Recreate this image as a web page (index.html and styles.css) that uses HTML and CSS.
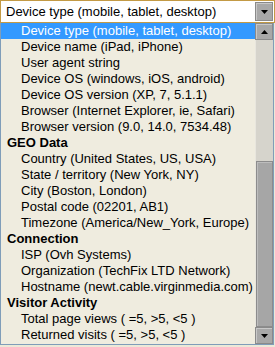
FILE: index.html
```html
<!DOCTYPE html>
<html>
<head>
<meta charset="utf-8">
<link rel="stylesheet" href="styles.css">
</head>
<body>
<div class="combo">
  <div class="select">
    <span class="value">Device type (mobile, tablet, desktop)</span>
    <span class="btn"><svg width="7" height="4" viewBox="0 0 7 4"><path d="M0 0h7L3.5 4z" fill="#000"/></svg></span>
  </div>
  <div class="listbox">
    <ul class="options">
      <li class="opt sel">Device type (mobile, tablet, desktop)</li>
      <li class="opt">Device name (iPad, iPhone)</li>
      <li class="opt">User agent string</li>
      <li class="opt">Device OS (windows, iOS, android)</li>
      <li class="opt">Device OS version (XP, 7, 5.1.1)</li>
      <li class="opt">Browser (Internet Explorer, ie, Safari)</li>
      <li class="opt">Browser version (9.0, 14.0, 7534.48)</li>
      <li class="group">GEO Data</li>
      <li class="opt">Country (United States, US, USA)</li>
      <li class="opt">State / territory (New York, NY)</li>
      <li class="opt">City (Boston, London)</li>
      <li class="opt">Postal code (02201, AB1)</li>
      <li class="opt">Timezone (America/New_York, Europe)</li>
      <li class="group">Connection</li>
      <li class="opt">ISP (Ovh Systems)</li>
      <li class="opt">Organization (TechFix LTD Network)</li>
      <li class="opt">Hostname (newt.cable.virginmedia.com)</li>
      <li class="group">Visitor Activity</li>
      <li class="opt">Total page views ( =5, &gt;5, &lt;5 )</li>
      <li class="opt">Returned visits ( =5, &gt;5, &lt;5 )</li>
    </ul>
    <div class="scrollbar">
      <span class="sbtn"><svg width="7" height="4" viewBox="0 0 7 4"><path d="M3.5 0L7 4H0z" fill="#000"/></svg></span>
      <div class="track">
        <div class="gap"></div>
        <div class="thumb"></div>
      </div>
      <span class="sbtn"><svg width="7" height="4" viewBox="0 0 7 4"><path d="M0 0h7L3.5 4z" fill="#000"/></svg></span>
    </div>
  </div>
</div>
</body>
</html>
```
FILE: styles.css
```css
html, body {
  margin: 0;
  padding: 0;
  background: #ece9d8;
}
body {
  width: 275px;
  height: 347px;
  overflow: hidden;
  font-family: "Liberation Sans", Arial, sans-serif;
  font-size: 13px;
  color: #000;
}
.combo {
  width: 275px;
}
.select {
  box-sizing: border-box;
  height: 23px;
  border: 1px solid #c39a45;
  background: #fff;
  display: flex;
  align-items: center;
  padding: 0 1px 0 5px;
}
.value {
  flex: 1;
  line-height: 16px;
}
.btn, .sbtn {
  box-sizing: border-box;
  width: 18px;
  height: 19px;
  background: #a8a8a8;
  border: 1px solid #8a8a8a;
  box-shadow: inset 1px 1px 0 #c8c8c8;
  display: flex;
  align-items: center;
  justify-content: center;
}
.listbox {
  box-sizing: border-box;
  height: 322px;
  border: 1px solid #7f9db9;
  border-top: none;
  background: #efecdf;
  display: flex;
  margin-right: 1px;
}
.options {
  list-style: none;
  margin: 0;
  padding: 0;
  flex: 1;
}
.options li {
  height: 16px;
  line-height: 16px;
  white-space: nowrap;
}
.opt {
  padding-left: 20px;
}
.opt.sel {
  background: #3399ff;
  color: #fff;
}
.group {
  padding-left: 6px;
  font-weight: bold;
}
.scrollbar {
  width: 18px;
  display: flex;
  flex-direction: column;
}
.sbtn {
  height: 17px;
}
.track {
  flex: 1;
  display: flex;
  flex-direction: column;
  background: #d6d4cc;
  border-left: 1px solid #e8e6de;
}
.gap {
  height: 121px;
}
.thumb {
  flex: 1;
  background: #a6a6a6;
  border: 1px solid #8c8c8c;
  box-shadow: inset 1px 1px 0 #bdbdbd;
}
```
